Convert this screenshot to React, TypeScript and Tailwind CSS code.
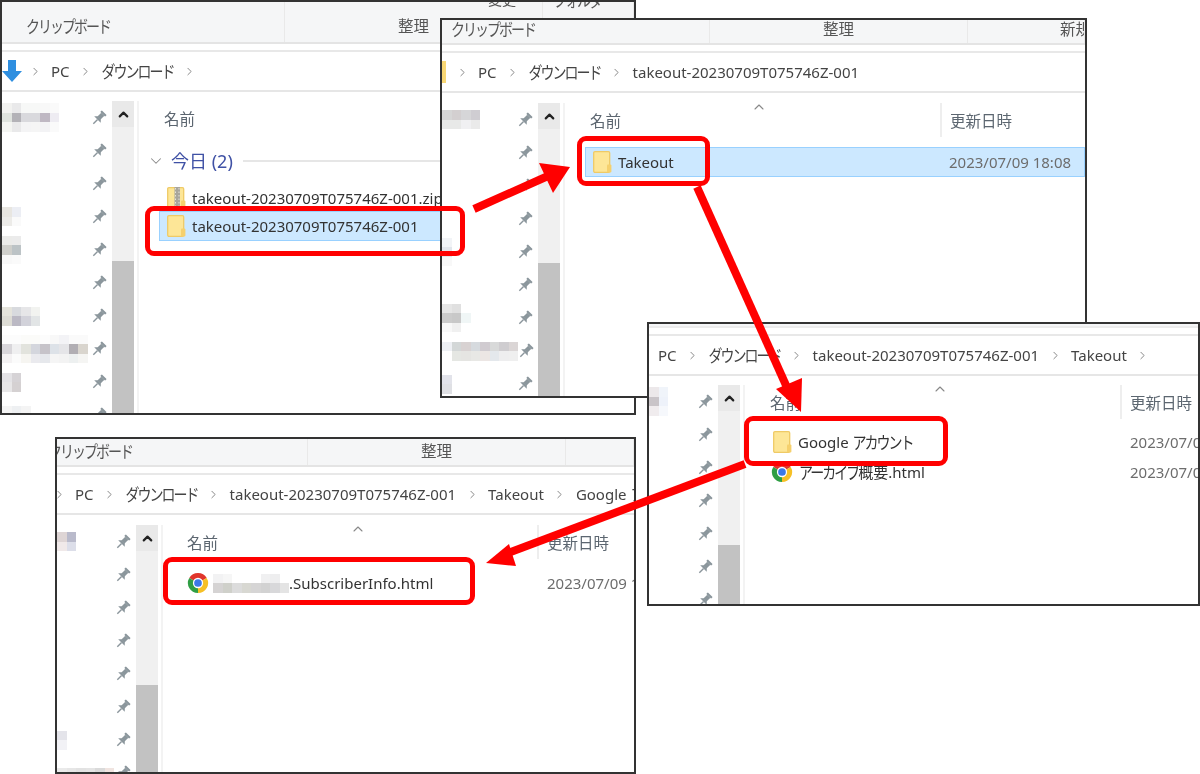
import type { ReactNode } from "react";
import { ChevronDown, ChevronRight, ChevronUp } from "lucide-react";

type Mosaic = string[][];

function Pin() {
  return (
    <svg width="16" height="16" viewBox="0 0 16 16" className="shrink-0">
      <g transform="rotate(45 8 8)" fill="#8b969c">
        <rect x="4.6" y="0.6" width="6.8" height="2.2" rx="0.5" />
        <rect x="5.8" y="2.6" width="4.4" height="5.4" />
        <path d="M3.4 10.2 5.8 7.6h4.4l2.4 2.6z" />
        <rect x="7.3" y="10" width="1.4" height="6" />
      </g>
    </svg>
  );
}

function Folder({ zip = false }: { zip?: boolean }) {
  return (
    <svg width="19" height="22" viewBox="0 0 19 22" className="shrink-0">
      <rect x="0.7" y="0.7" width="16" height="20.6" rx="1.2" fill="#fde697" stroke="#efca66" strokeWidth="1.3" />
      <rect x="14" y="13.5" width="4.4" height="8" rx="1" fill="#f5d06d" />
      {zip && <rect x="7.5" y="0" width="5.5" height="22" fill="#a9a69c" />}
      {zip && <path d="M8.5 1v20M12 1v20" stroke="#e4e2da" strokeWidth="1" strokeDasharray="1.5 2" />}
    </svg>
  );
}

function Chrome() {
  return (
    <svg width="22" height="22" viewBox="0 0 24 24" className="ml-[-2px] shrink-0">
      <path d="M12 12 2.47 6.5A11 11 0 0 1 21.53 6.5z" fill="#e0352b" />
      <path d="M12 12 21.53 6.5A11 11 0 0 1 12 23z" fill="#f6c026" />
      <path d="M12 12 12 23A11 11 0 0 1 2.47 6.5z" fill="#2f9e44" />
      <circle cx="12" cy="12" r="5.6" fill="#fff" />
      <circle cx="12" cy="12" r="4.2" fill="#3b78e7" />
    </svg>
  );
}

function Blocks({ rows, offset = "" }: { rows: Mosaic; offset?: string }) {
  return (
    <div className={`flex flex-col ${offset}`}>
      {rows.map((cols, i) => (
        <div key={i} className="flex">
          {cols.map((c, j) => (
            <div key={j} className="h-[9.5px] w-[9.5px]" style={{ background: c }} />
          ))}
        </div>
      ))}
    </div>
  );
}

function Sidebar({ rows, width }: { rows: (Mosaic | null)[]; width: string }) {
  return (
    <div className="flex shrink-0 overflow-hidden">
      <div className={`${width} shrink-0 overflow-hidden`}>
        {rows.map((m, i) => (
          <div key={i} className="flex h-[33.1px] items-center justify-between">
            {m ? <Blocks rows={m} /> : <span />}
            <span className="mr-[5px]">
              <Pin />
            </span>
          </div>
        ))}
      </div>
      <div className="flex w-[22px] shrink-0 flex-col bg-[#f0f0f0]">
        <div className="flex h-[26px] items-center justify-center bg-[#e9e9e9]">
          <ChevronUp size={15} strokeWidth={3.5} color="#222" />
        </div>
        <div className="h-[134px] shrink-0" />
        <div className="flex-1 bg-[#c2c2c2]" />
      </div>
      <div className="ml-[3px] w-[2px] shrink-0 bg-[#f3f3f3]" />
    </div>
  );
}

function Crumbs({ items }: { items: ReactNode[] }) {
  return (
    <div className="flex h-[40px] shrink-0 items-center overflow-hidden whitespace-nowrap border-b-2 border-[#e6e6e6] text-[15px] text-[#444]">
      {items.map((it, i) => (
        <span key={i} className="flex shrink-0 items-center">
          {it}
          {i < items.length - 1 && (
            <span className="mx-[9.5px] flex w-[13px] justify-center">
              <ChevronRight size={13} strokeWidth={1.6} color="#777" />
            </span>
          )}
        </span>
      ))}
    </div>
  );
}

const Kana = ({ children }: { children: ReactNode }) => (
  <span className="inline-block scale-y-[1.2] text-[14px] tracking-[-2px]">{children}</span>
);

function Ribbon({ h, cells }: { h: string; cells: { w: string; label: ReactNode }[] }) {
  return (
    <div className={`flex shrink-0 border-b-2 border-[#e4e4e4] bg-[#f5f6f7] text-[15.5px] text-[#555] ${h}`}>
      {cells.map((c, i) => (
        <div key={i} className={`flex items-center border-r border-[#e9e9e9] ${c.w}`}>
          {c.label}
        </div>
      ))}
    </div>
  );
}

function Header({
  nameW,
  pad,
  caret,
  date = true,
}: {
  nameW: string;
  pad: string;
  caret?: string;
  date?: boolean;
}) {
  return (
    <div className="flex h-[34px] shrink-0 text-[15.5px] text-[#5c6670]">
      <div className={`flex ${nameW} ${pad} ${date ? "border-r-2 border-[#eeeeee]" : ""}`}>
        <span className="mt-[6.5px]">名前</span>
        {caret && (
          <span className={`mt-[-4px] ${caret}`}>
            <ChevronUp size={16} strokeWidth={1.6} color="#888" />
          </span>
        )}
      </div>
      {date && <span className="ml-[8px] mt-[6.5px] whitespace-nowrap">更新日時</span>}
    </div>
  );
}

function FileRow({
  ml,
  cellW,
  icon,
  name,
  date,
  selected = false,
}: {
  ml: string;
  cellW: string;
  icon: ReactNode;
  name: ReactNode;
  date?: string;
  selected?: boolean;
}) {
  return (
    <div
      className={`flex h-[30px] shrink-0 items-center whitespace-nowrap border text-[15px] text-[#333] ${ml} ${
        selected ? "border-[#99d1ff] bg-[#cce8ff]" : "border-transparent"
      }`}
    >
      <div className={`flex shrink-0 items-center gap-[6px] pl-[7px] ${cellW}`}>
        {icon}
        {name}
      </div>
      {date && <span className="text-[#6d6d6d]">{date}</span>}
    </div>
  );
}

function Window({ pos, children }: { pos: string; children: ReactNode }) {
  return (
    <div className={`absolute overflow-hidden border-2 border-[#333] bg-white ${pos}`}>
      <div className="flex h-full flex-col blur-[0.5px]">{children}</div>
    </div>
  );
}

const Gap = () => <div className="h-[6px] shrink-0 border-b-2 border-[#e8e8e8] box-content" />;

const takeout = "takeout-20230709T075746Z-001";

const side1: (Mosaic | null)[] = [
  [["#f2f2f0", "#e9e9ea", "#f7f8f7", "#f7f8f7", "#f8f8f8", "#fafafa"], ["#dfe3de", "#b3b2b7", "#d9d9dd", "#d9d9dd", "#bfb8c3", "#eeecf2"], ["#f4f5f2", "#e9e9ea", "#f4f4f5", "#f5f5f5", "#f3f3f5", "#fafafa"]],
  null,
  null,
  [["#e8e6e1", "#eceef4"], ["#ecebe8", "#fafafa"]],
  [["#ebebe9", "#ebebeb"], ["#cfcfcb", "#bcc3c6"], ["#f8f8f8", "#fafafa"]],
  null,
  [["#e5e4dc", "#d8dade", "#e6e6e8", "#f2f3f0"], ["#dddcd5", "#bbb9c4", "#d2d2da", "#e2e5e6"]],
  [["#fcfcfc", "#fcfcfc", "#fbfbf9", "#fbfbf9", "#fcfcfc", "#f8f8f8", "#f3f3f6", "#fafafa", "#fafafa"], ["#d8d6da", "#efeff0", "#e2e3dd", "#d4d6dd", "#c6c3c9", "#dde2e8", "#e5e5e8", "#b1aeb3", "#d9d5ce"], ["#f4f2f3", "#fbfbfb", "#f6f5f1", "#eaeaee", "#e6e8ec", "#f5f5f5", "#f3f3f3", "#edf0f0", "#f5f5f3"]],
  [["#e4e3e6", "#d6d3d6"], ["#e8e7e8", "#d5d1d2"]],
  [["#f5f5f5", "#eef0f2", "#f4f4f4"], ["#e3e5dd", "#e6e6e0", "#b6c0c0"]],
];

const side2: (Mosaic | null)[] = [
  [["#d6d6d6", "#d3cfd0", "#d6d6d8", "#cfcdd2"], ["#e8e9e8", "#e8e9e8", "#f0f0f2", "#eaeaea"]],
  null,
  null,
  null,
  [["#f2f4f7"], ["#e3e6ec"], ["#f8f8f8"]],
  null,
  [["#e6e6e6", "#e0e0e0"], ["#cbcbcb", "#c8c8c8", "#f0f6f6"], ["#f8f8f8", "#f0f0f0"]],
  [["#eef0f4", "#d3d7d7", "#d8d2d2", "#d6dade", "#d0cbd0", "#d8d9d9", "#cfcdd0", "#dbd6d6"], ["#ffffff", "#e5e7e3", "#e5e5e2", "#e8e8e5", "#ece6e4", "#e4e8ec", "#eeeeef", "#efefef"]],
  [["#e2e3ea"], ["#dfe0e4"]],
];

const side3: (Mosaic | null)[] = [
  [["#ece8ea", "#f0f4fa"], ["#c9c4c8", "#eef2fa"], ["#f0ecee", "#f6f8fc"]],
  null,
  null,
  null,
  null,
  null,
  null,
];

const side4: (Mosaic | null)[] = [
  [["#ded5d5", "#b9bacb"], ["#f0e9e9", "#dcdee9"]],
  null,
  null,
  null,
  null,
  null,
  [["#e4e4ea"], ["#f2f2f6"]],
  [["#eaeaea", "#e6e6e6", "#e2e2e2", "#e4e4e4", "#dadada", "#f0e4e0"]],
];

const blurredName: Mosaic = [
  ["#f2f2f3", "#f6f6f6", "#ffffff", "#ffffff", "#ffffff", "#f0f0f1", "#eeeeef", "#ffffff"],
  ["#d5d3d3", "#cfd0ca", "#dcdcdc", "#d8d8d2", "#d6d5d5", "#d2d2d2", "#d8d8da", "#e4e4e4"],
];

export default function App() {
  return (
    <div className="relative h-[774px] w-[1200px] overflow-hidden bg-white font-['Noto_Sans','Noto_Sans_CJK_JP',sans-serif]">
      {/* ダウンロード */}
      <Window pos="left-0 top-0 h-[415px] w-[636px]">
        <Ribbon
          h="h-[42px]"
          cells={[
            { w: "w-[283px] pl-[24px] pt-[9px]", label: <Kana>クリップボード</Kana> },
            {
              w: "relative w-[258px] justify-center pt-[9px]",
              label: (
                <>
                  整理
                  <span className="absolute left-[203px] top-[-13px] text-[14px]">変更</span>
                </>
              ),
            },
            {
              w: "relative flex-1",
              label: <span className="absolute left-[10px] top-[-13px]"><Kana>フォルダ</Kana></span>,
            },
          ]}
        />
        <Gap />
        <Crumbs
          items={[
            <svg width="22" height="24" viewBox="0 0 22 24" className="mr-[-5px]">
              <path d="M6 1h8v11h6L10 23 0 12h6z" fill="#2f8fe0" />
            </svg>,
            <span>PC</span>,
            <Kana>ダウンロード</Kana>,
            <span />,
          ]}
        />
        <div className="flex min-h-0 flex-1 pt-[9px]">
          <Sidebar rows={side1} width="w-[110px]" />
          <div className="min-w-0 flex-1">
            <Header nameW="w-full" pad="pl-[25px]" date={false} />
            <div className="mt-[10px] flex h-[32px] items-center pl-[8px] text-[#3f51a5]">
              <ChevronDown size={18} strokeWidth={1.4} color="#8a8a8a" />
              <span className="ml-[6px] text-[18px]">今日 (2)</span>
              <div className="ml-[10px] h-[2px] flex-1 bg-[#e6e6e6]" />
            </div>
            <div className="mt-[6px] flex flex-col">
              <div className="h-[28px]">
                <FileRow ml="ml-[20px]" cellW="" icon={<Folder zip />} name={<span>{takeout}.zip</span>} />
              </div>
              <FileRow ml="ml-[20px]" cellW="" selected icon={<Folder />} name={<span>{takeout}</span>} />
            </div>
          </div>
        </div>
      </Window>

      {/* takeout-... */}
      <Window pos="left-[440px] top-[18px] h-[380px] w-[647px]">
        <Ribbon
          h="h-[25px]"
          cells={[
            { w: "w-[268px] pl-[9px] pb-[4px]", label: <Kana>クリップボード</Kana> },
            { w: "w-[258px] justify-center pb-[4px]", label: "整理" },
            { w: "flex-1 pl-[92px] pb-[4px] whitespace-nowrap overflow-hidden", label: "新規" },
          ]}
        />
        <Gap />
        <Crumbs
          items={[
            <span className="ml-[-2px] block h-[22px] w-[6px] bg-[#f8d775]" />,
            <span>PC</span>,
            <Kana>ダウンロード</Kana>,
            <span>{takeout}</span>,
          ]}
        />
        <div className="flex min-h-0 flex-1 pt-[10px]">
          <Sidebar rows={side2} width="w-[96px]" />
          <div className="min-w-0 flex-1">
            <Header nameW="w-[377px]" pad="pl-[25px]" caret="ml-[130px]" />
            <div className="mt-[10px]">
              <FileRow
                ml="ml-[20px]"
                cellW="w-[363px]"
                selected
                icon={<Folder />}
                name={<span>Takeout</span>}
                date="2023/07/09 18:08"
              />
            </div>
          </div>
        </div>
      </Window>

      {/* Takeout */}
      <Window pos="left-[647px] top-[322px] h-[284px] w-[553px]">
        <div className="h-[2px] shrink-0 border-b-2 border-[#ececec] bg-[#f5f6f7] box-content" />
        <Gap />
        <Crumbs items={[<span className="ml-[9px]">PC</span>, <Kana>ダウンロード</Kana>, <span>{takeout}</span>, <span>Takeout</span>, <span />]} />
        <div className="flex min-h-0 flex-1 pt-[9px]">
          <Sidebar rows={side3} width="w-[69px]" />
          <div className="min-w-0 flex-1">
            <Header nameW="w-[377px]" pad="pl-[25px]" caret="ml-[131px]" />
            <div className="mt-[8px] flex flex-col">
              <FileRow
                ml="ml-[20px]"
                cellW="w-[364px]"
                icon={<Folder />}
                name={<span>Google <Kana>アカウント</Kana></span>}
                date="2023/07/09 18:08"
              />
              <FileRow
                ml="ml-[20px]"
                cellW="w-[364px]"
                icon={<Chrome />}
                name={<span><Kana>アーカイブ</Kana>概要.html</span>}
                date="2023/07/09 18:08"
              />
            </div>
          </div>
        </div>
      </Window>

      {/* Google アカウント */}
      <Window pos="left-[55px] top-[437px] h-[337px] w-[581px]">
        <Ribbon
          h="h-[28px]"
          cells={[
            { w: "w-[251px] overflow-hidden", label: <span className="ml-[-9px] whitespace-nowrap"><Kana>クリップボード</Kana></span> },
            { w: "w-[258px] justify-center", label: "整理" },
            { w: "flex-1", label: "" },
          ]}
        />
        <Gap />
        <Crumbs items={[<span className="ml-[-14px]" />, <span>PC</span>, <Kana>ダウンロード</Kana>, <span>{takeout}</span>, <span>Takeout</span>, <span>Google アカウント</span>]} />
        <div className="flex min-h-0 flex-1 pt-[10px]">
          <Sidebar rows={side4} width="w-[79px]" />
          <div className="min-w-0 flex-1">
            <Header nameW="w-[376px]" pad="pl-[24px]" caret="ml-[132px]" />
            <div className="mt-[9px]">
              <FileRow
                ml="ml-[18px]"
                cellW="w-[365px]"
                icon={<Chrome />}
                name={
                  <span className="ml-[-2px] flex items-center">
                    <Blocks rows={blurredName} />
                    <span>.SubscriberInfo.html</span>
                  </span>
                }
                date="2023/07/09 18:08"
              />
            </div>
          </div>
        </div>
      </Window>

      {/* 赤枠 */}
      <div className="absolute left-[145px] top-[206px] h-[50px] w-[320px] rounded-[9px] border-[5px] border-[#f00]" />
      <div className="absolute left-[577px] top-[136px] h-[50px] w-[133px] rounded-[9px] border-[5px] border-[#f00]" />
      <div className="absolute left-[744px] top-[416px] h-[50px] w-[204px] rounded-[9px] border-[5px] border-[#f00]" />
      <div className="absolute left-[163px] top-[557px] h-[48px] w-[312px] rounded-[9px] border-[5px] border-[#f00]" />

      {/* 矢印 */}
      <svg className="absolute left-0 top-0 h-[774px] w-[1200px]" viewBox="0 0 1200 774">
        <g fill="#f00" stroke="#f00">
          <path d="M474 209 548 176" strokeWidth="8" fill="none" />
          <path d="M570 167 539 163 553 193z" strokeWidth="0" />
          <path d="M697 187 789 392" strokeWidth="8" fill="none" />
          <path d="M801 412 776 389 802 378z" strokeWidth="0" />
          <path d="M745 464 508 553" strokeWidth="8" fill="none" />
          <path d="M486 563 509 544 516 566z" strokeWidth="0" />
        </g>
      </svg>
    </div>
  );
}
